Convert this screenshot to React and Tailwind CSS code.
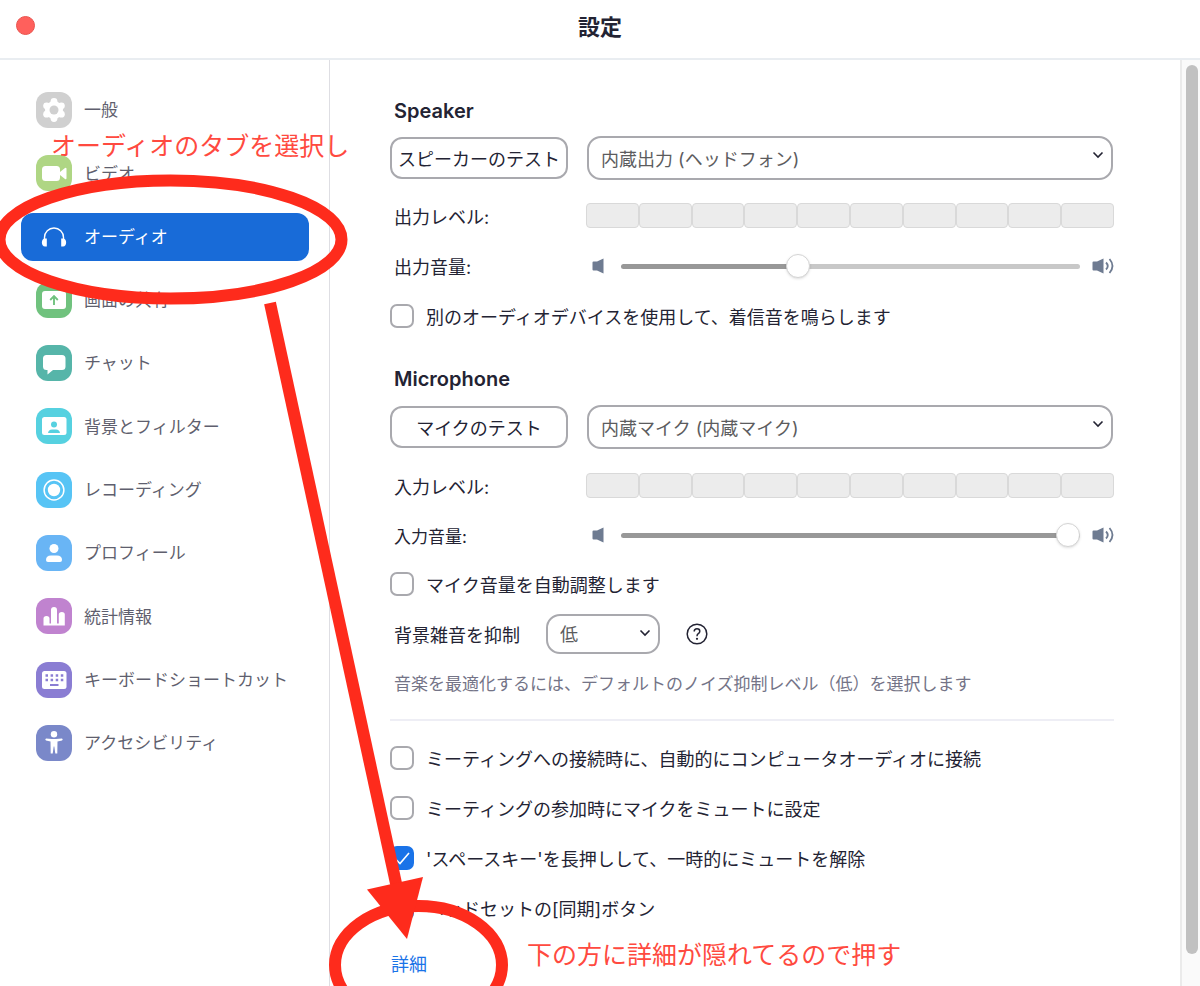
import React, { useState } from 'react';

const Tile = ({ className, children }) => (
  <svg viewBox="0 0 36 36" className={`w-9 h-9 shrink-0 rounded-xl ${className}`} aria-hidden="true">
    {children}
  </svg>
);

const TABS = [
  {
    id: 'general',
    label: '一般',
    icon: (
      <Tile className="bg-[#d0d0d0]">
        <g fill="#fff">
          <circle cx="18" cy="18" r="9" />
          <circle cx="18" cy="9.5" r="3.4" />
          <circle cx="25.4" cy="13.8" r="3.4" />
          <circle cx="25.4" cy="22.2" r="3.4" />
          <circle cx="18" cy="26.5" r="3.4" />
          <circle cx="10.6" cy="22.2" r="3.4" />
          <circle cx="10.6" cy="13.8" r="3.4" />
        </g>
        <circle cx="18" cy="18" r="4.5" fill="#d0d0d0" />
      </Tile>
    ),
  },
  {
    id: 'video',
    label: 'ビデオ',
    icon: (
      <Tile className="bg-[#afd684]">
        <rect x="6" y="11" width="18" height="15" rx="3.5" fill="#fff" />
        <path d="M24 17 L29 13 Q30.5 12 30.5 14 V23 Q30.5 25 29 24 L24 20 Z" fill="#fff" />
      </Tile>
    ),
  },
  {
    id: 'audio',
    label: 'オーディオ',
    icon: (
      <Tile className="bg-transparent">
        <path d="M8.5 21 V18.5 A9.5 9.5 0 0 1 27.5 18.5 V21" fill="none" stroke="#fff" strokeWidth="1.4" />
        <path d="M10.8 19.500 V27.500 H9 C4.800 27.500 4.800 19.500 9 19.500 Z" fill="#fff" />
        <path d="M25.200 19.500 V27.500 H27 C31.200 27.500 31.200 19.500 27 19.500 Z" fill="#fff" />
      </Tile>
    ),
  },
  {
    id: 'share',
    label: '画面の共有',
    icon: (
      <Tile className="bg-[#70c27e]">
        <rect x="6" y="9" width="24" height="18" rx="3" fill="#fff" />
        <path d="M18 23 V14.5 M14.2 18 L18 14.2 L21.8 18" fill="none" stroke="#70c27e" strokeWidth="1.9" />
      </Tile>
    ),
  },
  {
    id: 'chat',
    label: 'チャット',
    icon: (
      <Tile className="bg-[#56b5a9]">
        <path d="M10.5 10 H26 Q29.5 10 29.5 13.5 V21.5 Q29.5 25 26 25 H17 L11.5 29.5 V25 H10.5 Q7 25 7 21.5 V13.5 Q7 10 10.5 10 Z" fill="#fff" />
      </Tile>
    ),
  },
  {
    id: 'background',
    label: '背景とフィルター',
    icon: (
      <Tile className="bg-[#56d1e0]">
        <rect x="6" y="9" width="24.5" height="18" rx="2.5" fill="#fff" />
        <circle cx="18" cy="16.5" r="3" fill="#56d1e0" />
        <path d="M12 25 Q12.5 21.5 16 21.5 H20 Q23.5 21.5 24 25 Z" fill="#56d1e0" />
      </Tile>
    ),
  },
  {
    id: 'recording',
    label: 'レコーディング',
    icon: (
      <Tile className="bg-[#57c4f5]">
        <circle cx="18" cy="18" r="9.9" fill="none" stroke="#fff" strokeWidth="1.5" />
        <circle cx="18" cy="18" r="6.2" fill="#fff" />
      </Tile>
    ),
  },
  {
    id: 'profile',
    label: 'プロフィール',
    icon: (
      <Tile className="bg-[#69b5f5]">
        <circle cx="18" cy="13.5" r="4.5" fill="#fff" />
        <path d="M10 25 Q10 20.5 15 20.5 H21 Q26 20.5 26 25 Q26 27 24 27 H12 Q10 27 10 25 Z" fill="#fff" />
      </Tile>
    ),
  },
  {
    id: 'stats',
    label: '統計情報',
    icon: (
      <Tile className="bg-[#c083cf]">
        <path d="M7.5 27.5 V20.5 Q7.5 18 10.5 18 Q13.5 18 13.5 20.5 V25.5 H15 V12 Q15 9 18 9 Q21 9 21 12 V25.5 H22.8 V16.5 Q22.8 14 25.8 14 Q28.800 14 28.800 16.5 V27.5 Z" fill="#fff" />
      </Tile>
    ),
  },
  {
    id: 'keyboard',
    label: 'キーボードショートカット',
    icon: (
      <Tile className="bg-[#8a7dd3]">
        <rect x="6" y="9" width="24.5" height="18" rx="2.5" fill="#fff" />
        <path d="M9.5 13.500 H27.5 M9.5 18 H27.5" stroke="#8a7dd3" strokeWidth="2.5" strokeDasharray="2.5 2.6" />
        <path d="M14 23 H22.5" stroke="#8a7dd3" strokeWidth="2" />
      </Tile>
    ),
  },
  {
    id: 'accessibility',
    label: 'アクセシビリティ',
    icon: (
      <Tile className="bg-[#7a88c9]">
        <circle cx="18" cy="9.3" r="3.2" fill="#fff" />
        <path d="M10 13.5 L16 14 H20 L26 13.5 Q27.5 14.5 26 15.5 L21.5 16.5 L21.3 28.5 H19.3 L18.3 21.5 H17.7 L16.7 28.5 H14.7 L14.5 16.5 L10 15.5 Q8.5 14.5 10 13.5 Z" fill="#fff" />
      </Tile>
    ),
  },
];

function Chevron({ className }) {
  return (
    <svg viewBox="0 0 12 8" className={`pointer-events-none absolute w-3 h-2 ${className}`} aria-hidden="true">
      <path d="M1.5 1.5 L6 6 L10.5 1.5" fill="none" stroke="#232333" strokeWidth="1.6" />
    </svg>
  );
}

function SpeakerIcon({ loud }) {
  return (
    <svg viewBox={loud ? '0 0 22 16' : '0 0 13 16'} className={loud ? 'w-[22px] h-4' : 'w-[13px] h-4'} aria-hidden="true">
      <path d="M0.5 4.5 Q0.5 3.5 1.5 3.5 H5 L11.5 0.5 V15.5 L5 12.5 H1.5 Q0.5 12.5 0.5 11.5 Z" fill="#6e7b91" />
      {loud && (
        <path d="M14 4.5 Q17.5 8 14 11.5 M17.5 1 Q23.5 8 17.5 15" fill="none" stroke="#6e7b91" strokeWidth="1.8" />
      )}
    </svg>
  );
}

function DeviceRow({ id, test, label, option }) {
  return (
    <div className="grid grid-cols-[178px_1fr] gap-[19px] items-center pr-px">
      <button className="h-[42px] rounded-xl border-2 border-[#a9a9ae] pt-0.5 text-[18px] whitespace-nowrap">{test}</button>
      <div className="relative">
        <select
          id={id}
          aria-label={label}
          className="block w-full h-11 appearance-none rounded-[14px] border-2 border-[#a9a9ae] bg-white pl-3 pt-0.5 text-[18px] text-[#5c5c5e]"
        >
          <option>{option}</option>
        </select>
        <Chevron className="right-[9px] top-[15px]" />
      </div>
    </div>
  );
}

function LevelRow({ label }) {
  return (
    <div className="grid grid-cols-[196px_1fr] items-center h-[25px]">
      <span className="pl-1 pt-1 text-[18px] leading-5">{label}</span>
      <div className="grid grid-cols-10 h-full">
        {Array.from({ length: 10 }, (_, i) => (
          <span key={i} className="rounded-[4px] border border-[#d9d9d9] bg-[#ececec]" />
        ))}
      </div>
    </div>
  );
}

function VolumeRow({ id, label, labelClass, initial }) {
  const [value, setValue] = useState(initial);

  return (
    <div className="grid grid-cols-[196px_1fr] items-center h-6">
      <label htmlFor={id} className={`pl-1 pt-1 leading-5 ${labelClass}`}>{label}</label>
      <div className="flex items-center pl-[6px]">
        <SpeakerIcon />
        <input
          id={id}
          type="range"
          min="0"
          max="100"
          value={value}
          onChange={(e) => setValue(Number(e.target.value))}
          style={{ backgroundImage: `linear-gradient(to right, #989898 ${value}%, #c8c8c8 ${value}%)` }}
          className="ml-4 mr-3 h-[5px] min-w-0 flex-1 appearance-none rounded-full [&::-webkit-slider-thumb]:appearance-none [&::-webkit-slider-thumb]:w-6 [&::-webkit-slider-thumb]:h-6 [&::-webkit-slider-thumb]:rounded-full [&::-webkit-slider-thumb]:bg-white [&::-webkit-slider-thumb]:border [&::-webkit-slider-thumb]:border-[#d4d4d4] [&::-webkit-slider-thumb]:shadow-sm"
        />
        <SpeakerIcon loud />
      </div>
    </div>
  );
}

function CheckRow({ id, label, checked = false }) {
  return (
    <div className="flex items-center gap-3 h-6">
      <span className="relative block w-6 h-6 shrink-0">
        <input
          id={id}
          type="checkbox"
          defaultChecked={checked}
          className="peer block w-6 h-6 appearance-none rounded-[7px] border-2 border-[#a9a9ae] bg-white checked:border-[#1a73e8] checked:bg-[#1a73e8]"
        />
        <svg viewBox="0 0 24 24" className="pointer-events-none absolute inset-0 hidden peer-checked:block" aria-hidden="true">
          <path d="M5 12.5 L10 17.5 L19 7" fill="none" stroke="#fff" strokeWidth="1.6" />
        </svg>
      </span>
      <label htmlFor={id} className="pt-[3px] text-[18px] leading-6 whitespace-nowrap">{label}</label>
    </div>
  );
}

// Red marker drawing laid over the window
function Annotations() {
  return (
    <div className="pointer-events-none absolute inset-0 overflow-hidden text-[25px] leading-8 text-[#ff4a40]">
      <svg width="1200" height="986" viewBox="0 0 1200 986" className="absolute left-0 top-0" aria-hidden="true">
        <g fill="none" stroke="#fe2b1c" strokeWidth="12">
          <ellipse cx="170.5" cy="239.5" rx="171" ry="59" />
          <ellipse cx="418.5" cy="965" rx="83.5" ry="59" />
          <path d="M270 303 L397 888" />
        </g>
        <path d="M367 889.5 L423 877 L407 939 Z" fill="#fe2b1c" />
      </svg>
      <p className="absolute left-[51px] top-[130px] whitespace-nowrap">オーディオのタブを選択し</p>
      <p className="absolute left-[527px] top-[939px] whitespace-nowrap">下の方に詳細が隠れてるので押す</p>
    </div>
  );
}

export default function App() {
  const [activeTab, setActiveTab] = useState('audio');

  return (
    <div
      lang="ja"
      className="relative flex h-screen flex-col overflow-hidden bg-white text-[#232333] font-[Inter,'Noto_Sans_CJK_JP',sans-serif]"
    >
      <header className="relative flex h-[60px] shrink-0 items-center justify-center border-b-2 border-[#e9edf1] pb-1">
        <button aria-label="閉じる" className="absolute left-4 top-4 h-[19px] w-[19px] rounded-full border border-[#e9544e] bg-[#ff605c]" />
        <h1 className="text-[22px] font-bold">設定</h1>
      </header>

      <div className="flex min-h-0 flex-1">
        {/* Sidebar */}
        <nav className="w-[330px] shrink-0 border-r border-[#dedee3] pl-[21px] pr-5 pt-[26px]">
          <div className="flex h-[681px] flex-col justify-between">
            {TABS.map((tab) => (
              <button
                key={tab.id}
                onClick={() => setActiveTab(tab.id)}
                className={`flex h-12 items-center gap-3 rounded-xl pl-[15px] text-left text-[17px] whitespace-nowrap ${
                  activeTab === tab.id ? 'bg-[#186bd8] text-white' : 'text-[#5f5f6e]'
                }`}
              >
                {tab.icon}
                <span className="pt-0.5">{tab.label}</span>
              </button>
            ))}
          </div>
        </nav>

        {/* Audio settings */}
        <main className="min-w-0 flex-1 overflow-hidden pl-[60px] pr-[66px] pt-[37px]">
          <section>
            <h2 className="mb-[11px] pl-1 text-[20px] font-semibold leading-7">Speaker</h2>
            <DeviceRow id="speaker" test="スピーカーのテスト" label="Speaker" option="内蔵出力 (ヘッドフォン)" />
            <div className="mt-[23px] flex flex-col gap-[26px]">
              <LevelRow label="出力レベル:" />
              <VolumeRow id="out-volume" label="出力音量:" labelClass="text-[18px]" initial={38} />
              <CheckRow id="ringtone" label="別のオーディオデバイスを使用して、着信音を鳴らします" />
            </div>
          </section>

          <section className="mt-[37px]">
            <h2 className="mb-3 pl-1 text-[20px] font-semibold leading-7">Microphone</h2>
            <DeviceRow id="mic" test="マイクのテスト" label="Microphone" option="内蔵マイク (内蔵マイク)" />
            <div className="mt-6 flex flex-col gap-[25px]">
              <LevelRow label="入力レベル:" />
              <VolumeRow id="in-volume" label="入力音量:" labelClass="text-[17px]" initial={100} />
              <CheckRow id="auto-adjust" label="マイク音量を自動調整します" />
            </div>
            <div className="mt-[18px] flex h-10 items-center">
              <label htmlFor="noise" className="pl-1 pt-0.5 text-[18px] whitespace-nowrap">背景雑音を抑制</label>
              <div className="relative ml-[26px] w-[114px]">
                <select
                  id="noise"
                  className="block w-full h-10 appearance-none rounded-[14px] border-2 border-[#a9a9ae] bg-white pl-3 text-[18px] text-[#5c5c5e]"
                >
                  <option>低</option>
                </select>
                <Chevron className="right-[9px] top-[15px]" />
              </div>
              <button aria-label="ヘルプ" className="ml-[26px]">
                <svg viewBox="0 0 22 22" className="block w-[22px] h-[22px]" aria-hidden="true">
                  <circle cx="11" cy="11" r="9.8" fill="none" stroke="#232333" strokeWidth="1.5" />
                  <path d="M8.2 8.5 Q8.2 5.7 11 5.7 Q13.8 5.7 13.8 8.2 Q13.8 9.7 12.3 10.7 Q11 11.6 11 13.2" fill="none" stroke="#232333" strokeWidth="1.5" />
                  <circle cx="11" cy="15.8" r="1.1" fill="#232333" />
                </svg>
              </button>
            </div>
            <p className="mt-[18px] pl-1 text-[17px] leading-6 text-[#747487] whitespace-nowrap">
              音楽を最適化するには、デフォルトのノイズ抑制レベル（低）を選択します
            </p>
          </section>

          <hr className="mt-[23px] border-t-2 border-[#eeeef5]" />

          <section className="mt-[25px] flex flex-col gap-[26px]">
            <CheckRow id="auto-join" label="ミーティングへの接続時に、自動的にコンピュータオーディオに接続" />
            <CheckRow id="mute-join" label="ミーティングの参加時にマイクをミュートに設定" />
            <CheckRow id="space-key" label="'スペースキー'を長押しして、一時的にミュートを解除" checked />
            <CheckRow id="headset" label="ヘッドセットの[同期]ボタン" checked />
          </section>

          <a href="#advanced" className="mt-[33px] inline-block pl-px text-[18px] leading-6 text-[#1a73e8]">詳細</a>
        </main>

        {/* Scrollbar */}
        <div className="w-5 shrink-0 border-l-2 border-[#ebebeb] bg-[#fafafa] pl-1 pr-[2px] pt-[5px] pb-8">
          <div className="h-full rounded-full bg-[#c1c1c1]" />
        </div>
      </div>

      <Annotations />
    </div>
  );
}
